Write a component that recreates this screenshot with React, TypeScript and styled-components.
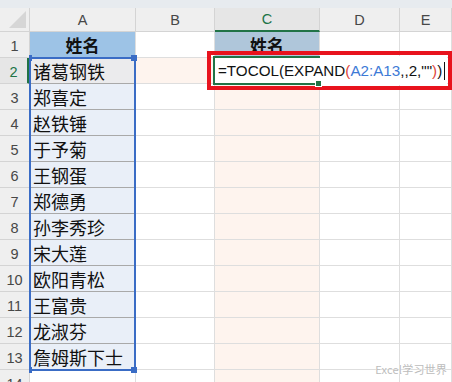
import React from "react";
import styled, { createGlobalStyle, css } from "styled-components";

const GlobalStyle = createGlobalStyle`
  html, body { margin: 0; padding: 0; background: #ffffff; }
  body { font-family: "Liberation Sans", Arial, sans-serif; }
`;

const Page = styled.div`
  position: relative;
  width: 452px;
  height: 382px;
  overflow: hidden;
  background: #ffffff;
`;

const TopStrip = styled.div`
  height: 8px;
  background: #e7ebef;
`;

const Sheet = styled.div`
  display: grid;
  grid-template-columns: 30px 106px 79px 105px 80px 52px;
  grid-template-rows: 24px repeat(14, 26px);
`;

const HeaderBase = css`
  box-sizing: border-box;
  background: #efefef;
  border-right: 1px solid #d4d4d4;
  border-bottom: 1px solid #d4d4d4;
  color: #474747;
  font-family: "Liberation Sans", Arial, sans-serif;
  font-size: 14.5px;
  display: flex;
  align-items: center;
  justify-content: center;
`;

const Corner = styled.div`
  ${HeaderBase};
  align-items: flex-end;
  justify-content: flex-end;
  padding: 0 3px 3px 0;
`;

const ColHeader = styled.div<{ $active?: boolean }>`
  ${HeaderBase};
  ${(p) =>
    p.$active &&
    css`
      color: #217346;
      background: #e6e6e6;
      border-bottom: 2px solid #217346;
    `}
`;

const RowHeader = styled.div<{ $active?: boolean }>`
  ${HeaderBase};
  padding-top: 2px;
  ${(p) =>
    p.$active &&
    css`
      color: #217346;
      background: #e6e6e6;
      border-right: 3px solid #217346;
    `}
`;

type Tone = "plain" | "header" | "headerC" | "range" | "rangeTop" | "peach";

const toneBg: Record<Tone, string> = {
  plain: "#ffffff",
  header: "#9dc3e6",
  headerC: "#afc6da",
  range: "#e9eff8",
  rangeTop: "#ebebed",
  peach: "#fef4ee",
};

const Cell = styled.div<{ $tone?: Tone; $bold?: boolean; $center?: boolean }>`
  box-sizing: border-box;
  background: ${(p) => toneBg[p.$tone ?? "plain"]};
  border-right: 1px solid #dedede;
  border-bottom: 1px solid
    ${(p) => (p.$tone === "range" || p.$tone === "rangeTop" ? "#a9a9a9" : "#dedede")};
  font-family: "Noto Sans CJK SC", "Liberation Sans", sans-serif;
  font-size: ${(p) => (p.$bold ? "17px" : "18px")};
  font-weight: ${(p) => (p.$bold ? 700 : 400)};
  color: #111;
  display: flex;
  align-items: center;
  justify-content: ${(p) => (p.$center ? "center" : "flex-start")};
  padding-left: ${(p) => (p.$center ? "0" : "3px")};
  white-space: nowrap;
  line-height: 1;
`;

/* Blue outline of the referenced range A2:A13, drawn over the sheet */
const RangeOutline = styled.div`
  position: absolute;
  left: 29px;
  top: 57px;
  width: 107px;
  height: 314px;
  box-sizing: border-box;
  border: 2px solid #3a6cc5;
  pointer-events: none;
`;

const Handle = styled.div<{ $corner: "tl" | "tr" | "bl" | "br" }>`
  position: absolute;
  width: ${(p) => (p.$corner === "tl" || p.$corner === "bl" ? 3 : 6)}px;
  height: 6px;
  background: #3a6cc5;
  ${(p) => (p.$corner[0] === "t" ? "top: -4px;" : "bottom: -4px;")}
  ${(p) => (p.$corner[1] === "l" ? "left: -2px;" : "right: -3px;")}
`;

/* Red annotation frame, lying over the sheet; the cell editor sits inside it */
const Annotation = styled.div`
  position: absolute;
  left: 207px;
  top: 51px;
  width: 245px;
  height: 39px;
  box-sizing: border-box;
  border: 4px solid #e8131d;
  padding: 1px 1px 0 2px;
  display: flex;
`;

const Editor = styled.div`
  flex: 1;
  height: 29px;
  background: #ffffff;
  display: flex;
`;

const ActiveCell = styled.div`
  position: relative;
  width: 107px;
  flex: none;
  box-sizing: border-box;
  border: 2px solid #217346;
  border-right: none;
  display: flex;
  align-items: center;
  padding-left: 3px;
  font-family: "Liberation Sans", Arial, sans-serif;
  font-size: 15.2px;
  color: #111;
  white-space: nowrap;
  overflow: visible;
`;

const FillHandle = styled.div`
  position: absolute;
  right: -2px;
  bottom: -4px;
  width: 5px;
  height: 5px;
  background: #217346;
  border: 1px solid #ffffff;
`;

const Tok = styled.span<{ $c?: "ref" | "paren" }>`
  flex: none;
  color: ${(p) => (p.$c === "ref" ? "#3d7ad6" : p.$c === "paren" ? "#e0463a" : "#111")};
`;

const Caret = styled.span`
  flex: none;
  display: block;
  width: 1px;
  height: 18px;
  background: #111;
  margin-left: 2px;
`;

const Watermark = styled.div`
  position: absolute;
  right: 5px;
  bottom: 5px;
  font-family: "Noto Sans CJK SC", "Liberation Sans", sans-serif;
  font-size: 11px;
  color: #bcbcbc;
  text-shadow: 0 0 1px #fff, 0 0 1px #fff;
  letter-spacing: 0.2px;
`;

const names = [
  "诸葛钢铁",
  "郑喜定",
  "赵铁锤",
  "于予菊",
  "王钢蛋",
  "郑德勇",
  "孙李秀珍",
  "宋大莲",
  "欧阳青松",
  "王富贵",
  "龙淑芬",
  "詹姆斯下士",
];

const cols = ["A", "B", "C", "D", "E"];

export default function App() {
  const rows: React.ReactNode[] = [];
  for (let r = 1; r <= 14; r++) {
    rows.push(
      <RowHeader key={`rh${r}`} $active={r === 2}>
        {r}
      </RowHeader>
    );
    if (r === 1) {
      rows.push(
        <Cell key="a1" $tone="header" $bold $center>
          姓名
        </Cell>,
        <Cell key="b1" />,
        <Cell key="c1" $tone="headerC" $bold $center>
          姓名
        </Cell>,
        <Cell key="d1" />,
        <Cell key="e1" />
      );
    } else {
      const name = names[r - 2];
      rows.push(
        <Cell key={`a${r}`} $tone={name ? (r === 2 ? "rangeTop" : "range") : "plain"}>
          {name}
        </Cell>,
        <Cell key={`b${r}`} $tone={r === 2 ? "peach" : "plain"} />,
        <Cell key={`c${r}`} $tone="peach" />,
        <Cell key={`d${r}`} />,
        <Cell key={`e${r}`} />
      );
    }
  }

  return (
    <Page>
      <GlobalStyle />
      <TopStrip />
      <Sheet>
        <Corner>
          <svg width="17" height="17" viewBox="0 0 17 17">
            <polygon points="17,0 17,17 0,17" fill="#d6d6d6" />
          </svg>
        </Corner>
        {cols.map((c) => (
          <ColHeader key={c} $active={c === "C"}>
            {c}
          </ColHeader>
        ))}
        {rows}
      </Sheet>

      <RangeOutline>
        <Handle $corner="tl" />
        <Handle $corner="tr" />
        <Handle $corner="bl" />
        <Handle $corner="br" />
      </RangeOutline>

      <Annotation>
        <Editor>
          <ActiveCell>
            <Tok>=TOCOL(EXPAND</Tok>
            <Tok $c="paren">(</Tok>
            <Tok $c="ref">A2:A13</Tok>
            <Tok>,,2,""</Tok>
            <Tok $c="paren">)</Tok>
            <Tok>)</Tok>
            <Caret />
            <FillHandle />
          </ActiveCell>
        </Editor>
      </Annotation>

      <Watermark>Excel学习世界</Watermark>
    </Page>
  );
}
